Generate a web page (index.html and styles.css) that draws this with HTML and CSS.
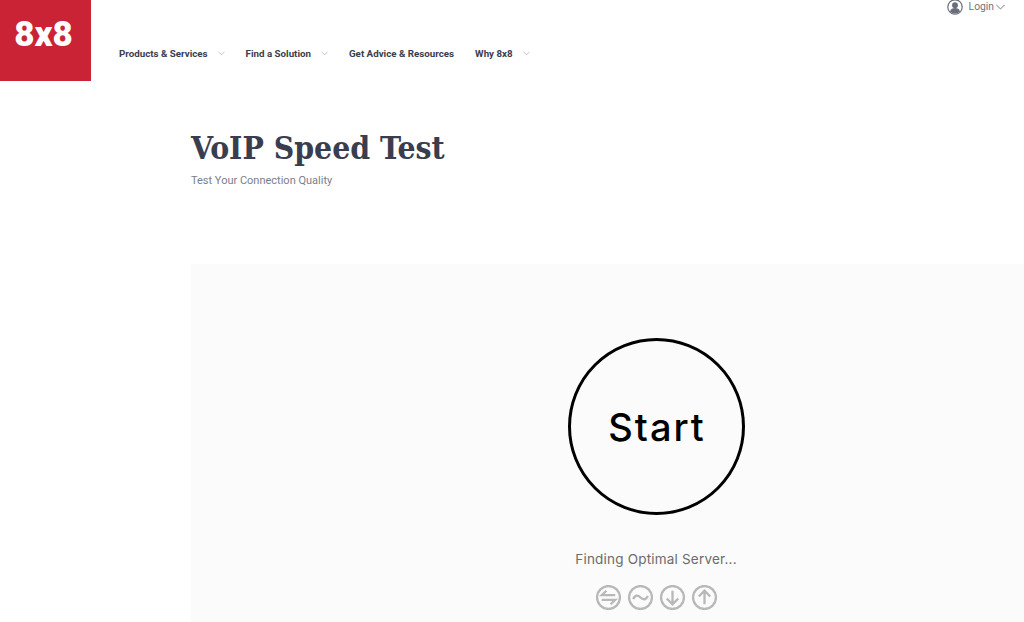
FILE: index.html
```html
<!DOCTYPE html>
<html lang="en">
<head>
<meta charset="utf-8">
<title>VoIP Speed Test</title>
<link rel="stylesheet" href="styles.css">
</head>
<body>
<header class="header">
  <a class="logo">8x8</a>
  <nav class="nav">
    <a class="nav-item">Products &amp; Services<svg class="caret" viewBox="0 0 8 5"><path d="M.5.5 4 4 7.500.5"/></svg></a>
    <a class="nav-item">Find a Solution<svg class="caret" viewBox="0 0 8 5"><path d="M.5.5 4 4 7.500.5"/></svg></a>
    <a class="nav-item">Get Advice &amp; Resources</a>
    <a class="nav-item">Why 8x8<svg class="caret" viewBox="0 0 8 5"><path d="M.5.5 4 4 7.500.5"/></svg></a>
  </nav>
  <a class="login">
    <svg class="user" viewBox="0 0 16 16"><circle cx="8" cy="8" r="7.200"/><circle class="solid" cx="8" cy="6.200" r="2.900"/><path class="solid" d="M3 12.500c.6-2.600 2.600-3.500 5-3.500s4.400.9 5 3.500c-1.200 1.200-3 2-5 2s-3.800-.8-5-2z"/></svg>
    <span>Login</span>
    <svg class="login-caret" viewBox="0 0 10 6"><path d="M.5.7 5 5.200 9.500.7"/></svg>
  </a>
</header>
<main class="main">
  <h1 class="title">VoIP Speed Test</h1>
  <p class="subtitle">Test Your Connection Quality</p>
  <section class="panel">
    <button class="start">Start</button>
    <p class="status">Finding Optimal Server...</p>
    <div class="icons">
      <svg class="metric" viewBox="0 0 24 24"><circle cx="12" cy="12" r="11"/><path d="M18.500 9.800h-13l4.500-4.300M5.500 14.200h13L14 18.500"/></svg>
      <svg class="metric" viewBox="0 0 24 24"><circle cx="12" cy="12" r="11"/><path d="M5 13.500c1.500-4 4.500-4 7-1.500s5.500 2.500 7-1.500"/></svg>
      <svg class="metric" viewBox="0 0 24 24"><circle cx="12" cy="12" r="11"/><path d="M12 5.500v13M6.500 13l5.500 5.500 5.500-5.500"/></svg>
      <svg class="metric" viewBox="0 0 24 24"><circle cx="12" cy="12" r="11"/><path d="M12 18.500v-13M6.500 11 12 5.500l5.500 5.500"/></svg>
    </div>
  </section>
</main>
</body>
</html>
```
FILE: styles.css
```css
* { box-sizing: border-box; }
html, body { margin: 0; height: 622px; overflow: hidden; background: #fff; }
body { font-family: Roboto, "Liberation Sans", sans-serif; color: #3a3d4d; }

.header { display: flex; height: 81px; }
.logo {
  width: 91px; height: 81px; background: #c92335; color: #fff;
  display: flex; align-items: center; justify-content: center;
  font: 900 35px/1 Roboto, sans-serif; padding: 0 4px 13px 0;
}
.nav { display: flex; align-items: center; gap: 21px; padding: 25px 0 0 28px; height: 81px; }
.nav-item { display: flex; align-items: center; font-size: 9.750px; font-weight: 700; color: #3a3d4d; }
.caret { width: 7px; height: 5px; margin-left: 10px; fill: none; stroke: #a9abb2; stroke-width: .8; }

.login {
  margin-left: auto; margin-right: 19px; height: 13px;
  display: flex; align-items: center; font-size: 10.300px; color: #71747f;
}
.user { width: 16px; height: 16px; margin-right: 6px; }
.user circle { fill: none; stroke: #6a6d7c; stroke-width: 1.200; }
.user .solid { fill: #6a6d7c; stroke: none; }
.login-caret { width: 9px; height: 6px; margin-left: 2px; fill: none; stroke: #6a6d7c; stroke-width: 1; }

.main { padding-left: 191px; }
.title {
  margin: 48px 0 0; font: 700 31.600px/38px "DejaVu Serif Condensed", "DejaVu Serif", serif;
  color: #3a3d4d;
}
.subtitle { margin: 7px 0 0; font-size: 11px; line-height: 14px; color: #7b7e8c; }

.panel {
  margin-top: 76px; height: 358px; background: #fbfbfb;
  display: flex; flex-direction: column; align-items: center;
  padding: 74px 0 0 97px;
}
.start {
  width: 177px; height: 177px; padding: 0 0 0 2px; border: 3px solid #000; border-radius: 50%;
  background: transparent; color: #000; font: 500 38px/1 Inter, sans-serif; letter-spacing: 2px;
}
.status { margin: 36px 0 0; font: 400 13.500px/16px Inter, sans-serif; color: #6b6b6b; letter-spacing: .2px; }
.icons { display: flex; gap: 7px; margin-top: 18px; }
.metric { width: 25px; height: 25px; fill: none; stroke: #b8b8b8; stroke-width: 2.200; }
```
